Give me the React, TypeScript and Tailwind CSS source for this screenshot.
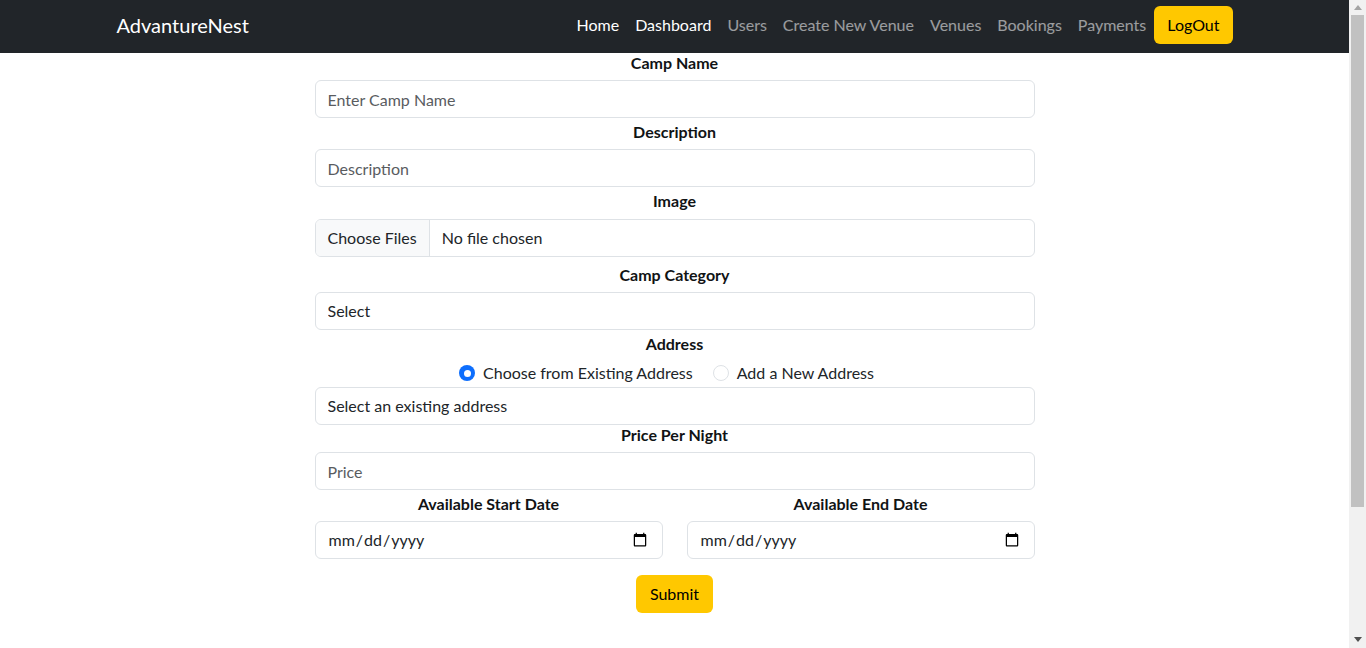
const links = [
  { label: "Home", active: true },
  { label: "Dashboard", active: true },
  { label: "Users", active: false },
  { label: "Create New Venue", active: false },
  { label: "Venues", active: false },
  { label: "Bookings", active: false },
  { label: "Payments", active: false },
];

const inputCls =
  "block h-[38px] w-full rounded-[6px] border border-[#dee2e6] bg-white px-3 text-base text-[#212529] outline-none placeholder:text-[#595c5f]";

function Label({ children, className = "" }: { children: React.ReactNode; className?: string }) {
  return (
    <label className={`block text-center text-base font-bold leading-5 text-[#111315] ${className}`}>
      {children}
    </label>
  );
}

function Navbar() {
  return (
    <nav className="h-[53px] bg-[#212529] pb-[3px]">
      <div className="mx-auto flex h-full w-[1140px] items-center justify-between px-3">
        <a className="text-xl text-white">AdvantureNest</a>
        <div className="flex items-center">
          {links.map((l) => (
            <a
              key={l.label}
              className={`px-2 text-base ${l.active ? "text-white" : "text-white/55"}`}
            >
              {l.label}
            </a>
          ))}
          <button className="h-[38px] rounded-[6px] bg-[#ffc800] px-[13px] text-base text-black">
            LogOut
          </button>
        </div>
      </div>
    </nav>
  );
}

function Radio({ checked, label, className = "" }: { checked: boolean; label: string; className?: string }) {
  return (
    <span className={`flex items-center gap-2 ${className}`}>
      {checked ? (
        <span className="grid h-4 w-4 place-items-center rounded-full bg-[#0d6efd]">
          <span className="h-[7px] w-[7px] rounded-full bg-white" />
        </span>
      ) : (
        <span className="h-4 w-4 rounded-full border border-[#dee2e6] bg-white" />
      )}
      <span className="text-base text-[#212529]">{label}</span>
    </span>
  );
}

function CampForm() {
  return (
    <form className="mx-auto w-[720px] pb-[197px]">
      <Label className="mb-[7px]">Camp Name</Label>
      <input className={`${inputCls} mb-1`} placeholder="Enter Camp Name" />

      <Label className="mb-[7px]">Description</Label>
      <input className={`${inputCls} mb-1`} placeholder="Description" />

      <Label className="mb-2">Image</Label>
      <input
        type="file"
        multiple
        className="mb-2 block h-[38px] w-full overflow-hidden rounded-[6px] border border-[#dee2e6] text-base leading-[36px] text-[#212529] file:mr-3 file:h-[36px] file:border-0 file:border-r file:border-solid file:border-[#dee2e6] file:bg-[#f8f9fa] file:px-3 file:text-base file:text-[#212529]"
      />

      <Label className="mb-[7px]">Camp Category</Label>
      <select className={`${inputCls} mb-1 appearance-none`} defaultValue="">
        <option value="">Select</option>
      </select>

      <Label className="mb-[7px]">Address</Label>
      <div className="mb-[2px] flex h-6 items-center justify-center">
        <Radio checked label="Choose from Existing Address" className="mr-5" />
        <Radio checked={false} label="Add a New Address" className="mr-4" />
      </div>
      <select className={`${inputCls} appearance-none`} defaultValue="">
        <option value="">Select an existing address</option>
      </select>

      <Label className="mb-[7px]">Price Per Night</Label>
      <input className={`${inputCls} mb-1`} placeholder="Price" />

      <div className="grid grid-cols-2 gap-6">
        <div>
          <Label className="mb-[7px]">Available Start Date</Label>
          <input type="date" className={inputCls} />
        </div>
        <div>
          <Label className="mb-[7px]">Available End Date</Label>
          <input type="date" className={inputCls} />
        </div>
      </div>

      <div className="mt-4 flex justify-center">
        <button type="button" className="h-[38px] rounded-[6px] bg-[#ffc800] px-[14px] text-base text-black">
          Submit
        </button>
      </div>
    </form>
  );
}

function FakeScrollbar() {
  return (
    <div className="sticky top-0 flex h-screen w-[17px] shrink-0 flex-col bg-[#f1f1f1]">
      <div className="flex h-[15px] items-center justify-center">
        <svg width="8" height="5" viewBox="0 0 8 5">
          <path d="M4 0 L8 5 L0 5 Z" fill="#a3a3a3" />
        </svg>
      </div>
      <div className="mx-[2px] h-[492px] bg-[#c1c1c1]" />
      <div className="flex-1" />
      <div className="flex h-[17px] items-center justify-center">
        <svg width="8" height="5" viewBox="0 0 8 5">
          <path d="M0 0 L8 0 L4 5 Z" fill="#505050" />
        </svg>
      </div>
    </div>
  );
}

export default function App() {
  return (
    <div className="flex min-h-screen bg-white" style={{ fontFamily: "Lato, sans-serif" }}>
      <div className="min-w-0 flex-1">
        <Navbar />
        <CampForm />
      </div>
      <FakeScrollbar />
    </div>
  );
}
